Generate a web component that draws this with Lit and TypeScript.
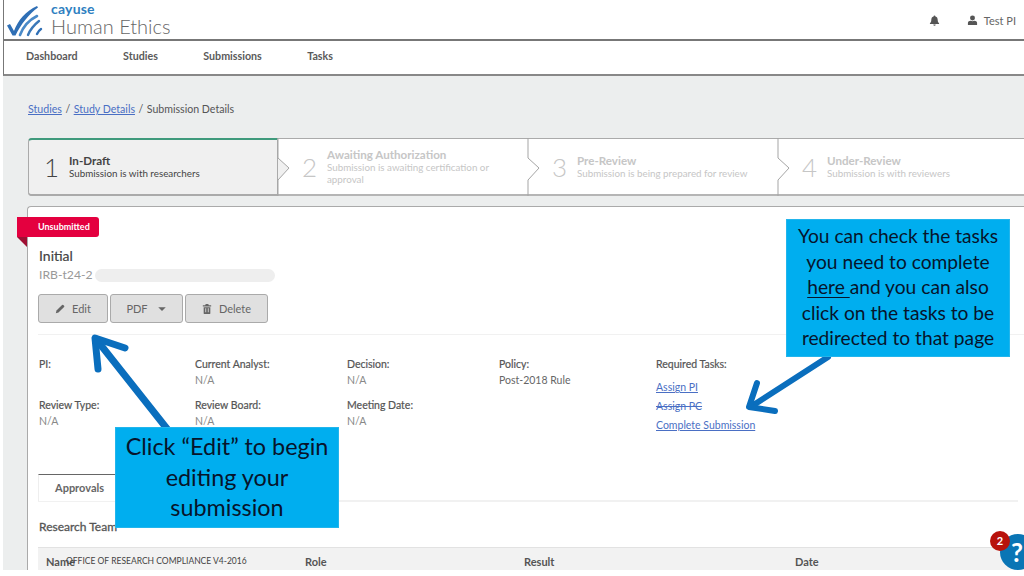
import { LitElement, html, css, svg } from "lit";
import { customElement } from "lit/decorators.js";

const steps = [
  { n: "1", title: "In-Draft", sub: "Submission is with researchers" },
  { n: "2", title: "Awaiting Authorization", sub: "Submission is awaiting certification or approval" },
  { n: "3", title: "Pre-Review", sub: "Submission is being prepared for review" },
  { n: "4", title: "Under-Review", sub: "Submission is with reviewers" },
];

const details = [
  { label: "PI:", value: "" },
  { label: "Current Analyst:", value: "N/A" },
  { label: "Decision:", value: "N/A" },
  { label: "Policy:", value: "Post-2018 Rule" },
  { label: "Review Type:", value: "N/A" },
  { label: "Review Board:", value: "N/A" },
  { label: "Meeting Date:", value: "N/A" },
];

const logo = svg`
  <path d="M7 25.500 L10 24 L14 31 C18 20 26 11 37 6 L38 7.500 C29 14 21 24 15.500 35.500 L12.500 35.500 Z" fill="#2f6fb5" />
  <path d="M20 35 C23 27 29 20 37 16" fill="none" stroke="#4a8ac8" stroke-width="2.6" stroke-linecap="round" />
  <path d="M28 35 C30 30 34 25 39 21" fill="none" stroke="#3b78b8" stroke-width="2.4" stroke-linecap="round" />
  <path d="M37 34 C38 32 39.500 30 41 29" fill="none" stroke="#2f6fb5" stroke-width="2.4" stroke-linecap="round" />
`;

@customElement("app-root")
export class AppRoot extends LitElement {
  static styles = css`
    :host {
      display: block;
      position: relative;
      width: 1024px;
      height: 576px;
      overflow: hidden;
      background: #fff;
      font-family: Lato, "Liberation Sans", sans-serif;
      color: #555;
    }

    header {
      box-sizing: border-box;
      height: 41px;
      margin-left: 3px;
      border-left: 1px solid #777;
      border-bottom: 2px solid #777;
      display: flex;
      align-items: flex-start;
      justify-content: space-between;
      overflow: hidden;
    }

    .brand {
      display: flex;
      height: 39px;
    }

    .brand svg {
      width: 44px;
      height: 39px;
      margin-left: -4px;
      flex: none;
    }

    .brand-text {
      margin-left: 7px;
      margin-top: 2px;
    }

    .cayuse {
      font-size: 14px;
      line-height: 13px;
      font-weight: 700;
      color: #2f7fc1;
      letter-spacing: 0.2px;
    }

    .product {
      font-size: 20px;
      line-height: 22px;
      font-weight: 300;
      color: #666;
    }

    .account {
      display: flex;
      align-items: center;
      height: 39px;
      padding-top: 2px;
      box-sizing: border-box;
      font-size: 11px;
      padding-right: 8px;
      color: #666;
    }

    .account svg {
      width: 11px;
      height: 11px;
      fill: #555;
    }

    .bell {
      margin-right: 27px;
    }

    .user {
      margin-right: 6px;
    }

    nav {
      box-sizing: border-box;
      height: 35px;
      margin-left: 3px;
      border-left: 1px solid #777;
      border-bottom: 2px solid #888;
      padding-left: 22px;
      padding-bottom: 4px;
      display: flex;
      align-items: center;
      gap: 45.400px;
      font-size: 10.700px;
      font-weight: 700;
      color: #5a5a5a;
    }

    main {
      box-sizing: border-box;
      height: 495px;
      margin-left: 3px;
      padding: 27px 0 0 24px;
      background: #eceeee;
      overflow: hidden;
    }

    .crumbs {
      font-size: 10.600px;
      line-height: 13px;
      padding-left: 1px;
      color: #555;
    }

    .crumbs a {
      color: #4a6fc4;
      text-decoration: underline;
    }

    .crumbs i {
      font-style: normal;
      margin: 0 3.500px;
    }

    .steps {
      margin-top: 22px;
      margin-left: 1px;
      height: 58px;
      box-sizing: border-box;
      display: grid;
      grid-template-columns: repeat(4, 250px);
      background: #fff;
      border-top: 1px solid #aaa;
      border-bottom: 2px solid #b5b5b5;
      border-radius: 4px 0 0 4px;
    }

    .step {
      position: relative;
      display: flex;
      align-items: center;
      padding-left: 24px;
      color: #c6c6c6;
    }

    .step.active {
      background: #f0f0f0;
      color: #444;
      margin-top: -1px;
      margin-bottom: -2px;
      padding-left: 15px;
      border: 1px solid #aaa;
      border-top: 2px solid #3f9a7c;
      border-bottom: 2px solid #aaa;
      border-radius: 4px 0 0 4px;
      box-sizing: border-box;
    }

    .step svg {
      position: absolute;
      left: -1px;
      top: -1px;
      width: 14px;
      height: 58px;
      z-index: 1;
    }

    .num {
      font-size: 26px;
      font-weight: 300;
      width: 25px;
      flex: none;
    }

    .step-title {
      font-size: 11.600px;
      line-height: 12px;
      font-weight: 700;
    }

    .step-sub {
      font-size: 9.800px;
      line-height: 12px;
      width: 175px;
    }

    .card {
      position: relative;
      margin-top: 10px;
      box-sizing: border-box;
      height: 380px;
      padding: 41px 0 0 11px;
      background: #fff;
      border: 1px solid #aaa;
      border-right: 0;
      border-bottom: 0;
      border-radius: 4px 0 0 0;
    }

    .ribbon {
      position: absolute;
      left: -11px;
      top: 10px;
      height: 20px;
      width: 82px;
      box-sizing: border-box;
      padding-left: 21px;
      background: #e4003f;
      color: #fff;
      font-size: 9px;
      line-height: 20px;
      font-weight: 700;
      border-radius: 0 3px 3px 0;
    }

    .ribbon::after {
      content: "";
      position: absolute;
      left: 0;
      top: 20px;
      border-top: 10px solid #9e0f33;
      border-left: 10px solid transparent;
    }

    h2 {
      margin: 0;
      font-size: 14px;
      line-height: 16px;
      font-weight: 400;
      color: #444;
      -webkit-text-stroke: 0.2px #444;
    }

    .irb {
      display: flex;
      align-items: center;
      margin-top: 3px;
      font-size: 12.200px;
      line-height: 16px;
      color: #999;
    }

    .irb span {
      width: 180px;
      height: 13px;
      margin-left: 2px;
      border-radius: 7px;
      background: #eeeeee;
    }

    .actions {
      display: flex;
      gap: 2px;
      margin-top: 11px;
      margin-left: -1px;
    }

    .btn {
      box-sizing: border-box;
      height: 29px;
      display: flex;
      align-items: center;
      justify-content: center;
      gap: 7px;
      background: #e0e0e0;
      border: 1px solid #aaa;
      border-radius: 3px;
      font-size: 11px;
      color: #666;
    }

    .btn svg {
      width: 10px;
      height: 10px;
      fill: #666;
    }

    .btn.edit {
      width: 70px;
    }

    .btn.pdf {
      width: 73px;
      gap: 9px;
    }

    .btn.delete {
      width: 83px;
    }

    hr {
      border: 0;
      border-top: 1px solid #f1f1f1;
      margin: 11px 0 0 -1px;
    }

    .details {
      display: flex;
      margin-top: 21px;
      font-size: 10.500px;
      line-height: 16px;
    }

    .grid {
      display: grid;
      grid-template-columns: 156px 152px 152px 157px;
      grid-auto-rows: 41px;
      width: 617px;
      flex: none;
    }

    .grid b {
      display: block;
      font-weight: 400;
      color: #555;
      -webkit-text-stroke: 0.2px #555;
    }

    .grid span {
      color: #888;
    }

    .grid .cell:nth-child(4) span {
      color: #666;
    }

    .tasks b {
      display: block;
      font-weight: 400;
      color: #555;
      -webkit-text-stroke: 0.2px #555;
      margin-bottom: 6px;
    }

    .tasks a {
      display: block;
      color: #4a6fc4;
      text-decoration: underline;
      line-height: 19px;
    }

    .tasks a.done {
      text-decoration: line-through;
    }

    .tabs {
      margin-top: 36px;
      margin-left: -1px;
      margin-right: 6px;
      border-bottom: 2px solid #f1f1f1;
      height: 26px;
    }

    .tab {
      display: inline-block;
      box-sizing: border-box;
      height: 27px;
      padding: 6px 16px;
      background: #fff;
      border-top: 1px solid #666;
      border-left: 1px solid #eee;
      font-size: 11px;
      font-weight: 700;
      color: #666;
    }

    h3 {
      margin: 18px 0 0;
      font-size: 12px;
      line-height: 14px;
      font-weight: 400;
      color: #555;
      -webkit-text-stroke: 0.3px #555;
    }

    .thead {
      position: relative;
      display: grid;
      grid-template-columns: 259px 219px 271px 1fr;
      margin: 13px 0 0 -1px;
      padding-left: 8px;
      height: 30px;
      box-sizing: border-box;
      padding-top: 7px;
      background: #f2f2f2;
      border-top: 1px solid #e2e2e2;
      font-size: 11px;
      font-weight: 700;
      color: #555;
    }

    .footnote {
      position: absolute;
      left: 66px;
      top: 554px;
      font-size: 10px;
      line-height: 12px;
      color: #444;
      transform: scaleX(0.85);
      transform-origin: left center;
    }

    .callout {
      position: absolute;
      box-sizing: border-box;
      background: #00aeef;
      border: 1px solid #22b5ec;
      color: #07142b;
      text-align: center;
    }

    .callout.edit {
      left: 115px;
      top: 427px;
      width: 224px;
      height: 101px;
      padding-top: 3px;
      font-size: 23.400px;
      line-height: 30.500px;
    }

    .callout.tasks-note {
      left: 786px;
      top: 219px;
      width: 224px;
      height: 138px;
      padding-top: 3px;
      font-size: 19.200px;
      line-height: 25.600px;
    }

    .callout u {
      text-underline-offset: 3px;
    }

    .arrows {
      position: absolute;
      inset: 0;
      width: 1024px;
      height: 576px;
      pointer-events: none;
    }

    .help {
      position: absolute;
      left: 1000px;
      top: 534px;
      width: 36px;
      height: 36px;
      border-radius: 50%;
      background: #0a75b5;
      color: #fff;
      font-size: 26px;
      line-height: 36px;
      font-weight: 700;
      padding-left: 11px;
      box-sizing: border-box;
    }

    .count {
      position: absolute;
      left: 990px;
      top: 531px;
      width: 20px;
      height: 20px;
      border-radius: 50%;
      background: #b8120c;
      color: #fff;
      font-size: 11px;
      line-height: 20px;
      font-weight: 700;
      text-align: center;
    }

    .bottom {
      position: absolute;
      left: 0;
      top: 570px;
      width: 1024px;
      height: 6px;
      background: #fff;
    }
  `;

  render() {
    return html`
      <header>
        <div class="brand">
          <svg viewBox="0 0 44 39">${logo}</svg>
          <div class="brand-text">
            <div class="cayuse">cayuse</div>
            <div class="product">Human Ethics</div>
          </div>
        </div>
        <div class="account">
          <svg class="bell" viewBox="0 0 12 12"><path d="M6 0.500a1 1 0 0 1 1 1C9 2 9.500 3.500 9.500 5.500c0 2 .7 2.800 1.500 3.500v.7H1V9c.8-.7 1.500-1.500 1.500-3.500C2.500 3.500 3 2 5 1.500a1 1 0 0 1 1-1ZM4.700 10.300h2.600A1.300 1.300 0 0 1 4.700 10.300Z" /></svg>
          <svg class="user" viewBox="0 0 12 12"><circle cx="6" cy="3.200" r="2.700" /><path d="M1 11V8.500C1 7 2.500 6.300 4 6.200c1.200.7 2.800.7 4 0 1.500.1 3 .8 3 2.300V11Z" /></svg>
          <span>Test PI</span>
        </div>
      </header>
      <nav>
        <span>Dashboard</span><span>Studies</span><span>Submissions</span><span>Tasks</span>
      </nav>
      <main>
        <div class="crumbs">
          <a>Studies</a><i>/</i><a>Study Details</a><i>/</i>Submission Details
        </div>
        <div class="steps">
          ${steps.map(
            (s, i) => html`
              <div class="step ${i === 0 ? "active" : ""}">
                ${i > 0
                  ? html`<svg viewBox="0 0 14 58">
                      <path
                        d="M1 0V20L12 30L1 42V58"
                        fill="${i === 1 ? "#f0f0f0" : "#fff"}"
                        stroke="#a5a5a5"
                        stroke-width="1"
                      />
                    </svg>`
                  : ""}
                <div class="num">${s.n}</div>
                <div>
                  <div class="step-title">${s.title}</div>
                  <div class="step-sub">${s.sub}</div>
                </div>
              </div>
            `
          )}
        </div>
        <section class="card">
          <div class="ribbon">Unsubmitted</div>
          <h2>Initial</h2>
          <div class="irb">IRB-t24-2<span></span></div>
          <div class="actions">
            <div class="btn edit">
              <svg viewBox="0 0 12 12"><path d="M1 11l.8-3.200L8.500 1.100a1 1 0 0 1 1.400 0l1 1a1 1 0 0 1 0 1.400L4.200 10.200Z" /></svg>Edit
            </div>
            <div class="btn pdf">
              PDF<svg viewBox="0 0 12 12"><path d="M1.500 4h9L6 8.500Z" /></svg>
            </div>
            <div class="btn delete">
              <svg viewBox="0 0 12 12"><path fill-rule="evenodd" d="M4.500 0h3l.7 1.500H11V3H1V1.500h2.800ZM2 4h8v7a1 1 0 0 1-1 1H3a1 1 0 0 1-1-1ZM4 5v5h1V5ZM7 5v5h1V5Z" /></svg>Delete
            </div>
          </div>
          <hr />
          <div class="details">
            <div class="grid">
              ${details.map(
                (d) => html`<div class="cell"><b>${d.label}</b><span>${d.value}</span></div>`
              )}
            </div>
            <div class="tasks">
              <b>Required Tasks:</b>
              <a>Assign PI</a>
              <a class="done">Assign PC</a>
              <a>Complete Submission</a>
            </div>
          </div>
          <div class="tabs"><span class="tab">Approvals</span></div>
          <h3>Research Team</h3>
          <div class="thead">
            <span>Name</span><span>Role</span><span>Result</span><span>Date</span>
          </div>
        </section>
      </main>
      <div class="bottom"></div>
      <div class="footnote">OFFICE OF RESEARCH COMPLIANCE V4-2016</div>
      <svg class="arrows" viewBox="0 0 1024 576">
        <g fill="none" stroke="#0a6ebd" stroke-linecap="round" stroke-linejoin="round">
          <path d="M168 430L96 339" stroke-width="7" />
          <path d="M125 348L95 338L98 369" stroke-width="7" />
          <path d="M828 357L752 406" stroke-width="6" />
          <path d="M757 383L749 407L775 411" stroke-width="6" />
        </g>
      </svg>
      <div class="callout edit">Click “Edit” to begin<br />editing your<br />submission</div>
      <div class="callout tasks-note">
        You can check the tasks<br />you need to complete<br /><u>here </u>and you can also<br />click on the tasks to be<br />redirected to that page
      </div>
      <div class="help">?</div>
      <div class="count">2</div>
    `;
  }
}
